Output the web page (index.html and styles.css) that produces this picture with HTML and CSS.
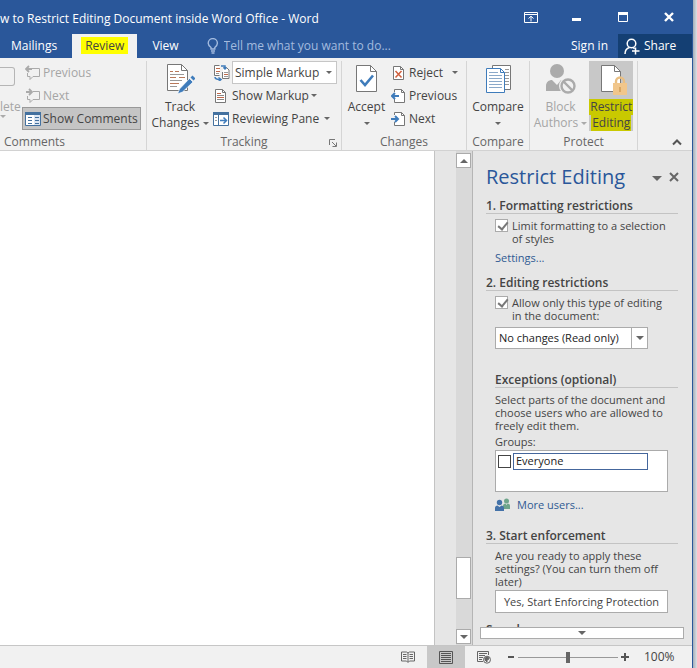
FILE: index.html
```
<!DOCTYPE html>
<html lang="en">
<head>
    <meta charset="UTF-8">
    <meta name="viewport" content="width=device-width, initial-scale=1.0">
    <title>Restrict Editing - Word</title>
    <link rel="stylesheet" href="styles.css">
</head>
<body>

<div class="window">
    <header class="titlebar">
        <div class="doc-title">w to Restrict Editing Document inside Word Office - Word</div>
        <div class="window-buttons">
            <button class="win-btn" aria-label="Ribbon display options">
                <svg width="14" height="11" viewBox="0 0 14 11" fill="none" stroke="#fff"><path d="M.5.5h13v10H.5zM1 2.500h12M7 9.500V4.500M4.500 6.500L7 4.200l2.500 2.300"/></svg>
            </button>
            <button class="win-btn" aria-label="Minimize">
                <svg width="10" height="11" viewBox="0 0 10 11"><path d="M0 6h9v3H0z" fill="#fff"/></svg>
            </button>
            <button class="win-btn" aria-label="Maximize">
                <svg width="10" height="10" viewBox="0 0 10 10"><path d="M.5.5h9v9h-9z" fill="none" stroke="#fff"/><path d="M0 0h10v3H0z" fill="#fff"/></svg>
            </button>
            <button class="win-btn" aria-label="Close">
                <svg width="10" height="10" viewBox="0 0 10 10"><path d="M1 1l8 8M9 1L1 9" stroke="#fff" stroke-width="2.400"/></svg>
            </button>
        </div>
    </header>

    <nav class="tabs">
        <button class="tab">Mailings</button>
        <button class="tab active"><span class="marker">Review</span></button>
        <button class="tab">View</button>
        <label class="tell-me">
            <svg width="12" height="16" viewBox="0 0 12 16" fill="none" stroke="#a3bbdf" stroke-width="1.400"><path d="M4 11V9.500C2.500 8.300 1.200 7 1.200 5.200a4.600 4.600 0 0 1 9.200 0c0 1.800-1.200 3.100-2.600 4.300V11zM4 13h4M4.500 15h3"/></svg>
            <input type="text" placeholder="Tell me what you want to do...">
        </label>
        <button class="sign-in">Sign in</button>
        <button class="share">
            <svg width="16" height="17" viewBox="0 0 16 17" fill="none" stroke="#fff" stroke-width="1.500"><circle cx="7.500" cy="5.500" r="4.300"/><path d="M1 16c0-3.500 1.600-5.600 4.500-6.500M9 9.500l1.500 1.200M11.500 9.500v7M8 13h7.500"/></svg>
            Share
        </button>
    </nav>

    <section class="ribbon">
        <div class="group comments">
            <div class="group-body">
                <button class="delete disabled">
                    <span class="delete-icon"></span>
                    <span>lete</span>
                    <i class="caret"></i>
                </button>
                <div class="rows">
                    <button class="row disabled">
                        <svg width="16" height="16" viewBox="0 0 16 16" fill="none" stroke="#aaa"><path d="M7 3.500h7.500v8H8l-3 3v-3H2.500V8"/><path d="M1 4h6M4 1L1 4l3 3" stroke-width="1.800"/></svg>
                        Previous
                    </button>
                    <button class="row disabled">
                        <svg width="16" height="16" viewBox="0 0 16 16" fill="none" stroke="#aaa"><path d="M8 3.500h6.500v8H8l-3 3v-3H2.500V8"/><path d="M1 4h6M4 1l3 3-3 3" stroke-width="1.800"/></svg>
                        Next
                    </button>
                    <button class="row pressed">
                        <svg width="16" height="14" viewBox="0 0 16 14"><path d="M.5.5h15v13H.5z" fill="#fff" stroke="#44719f"/><path d="M0 0h16v3H0z" fill="#44719f"/><path d="M9 3h6v10H9z" fill="#dce6f2"/><path d="M3 5.500h4M3 8.500h4M3 11.500h4M10 5.500h4M10 8.500h4M10 11.500h4" stroke="#44719f"/></svg>
                        Show Comments
                    </button>
                </div>
            </div>
            <div class="group-name">Comments</div>
        </div>

        <div class="group tracking">
            <div class="group-body">
                <button class="big">
                    <svg width="29" height="32" viewBox="0 0 29 32"><path d="M1.500 1.500h14l6 6v20h-20z" fill="#fff" stroke="#777"/><path d="M15.500 1.500v6h6" fill="none" stroke="#777"/><path d="M4 8.500h3M9 8.500h4M4 14.500h6M13 14.500h6M4 20.500h9" stroke="#b9795b"/><path d="M4 11.500h14M4 17.500h12M4 23.500h7" stroke="#999"/><path d="M13.500 26l10-10.500 3.500 3.500-10.500 10-5 2z" fill="#3f7cbb" stroke="#fff" stroke-width=".7"/><path d="M24.500 14.500l2-2 3 3-2 2z" fill="#3f7cbb"/></svg>
                    <span>Track</span>
                    <span>Changes <i class="caret"></i></span>
                </button>
                <div class="rows">
                    <div class="row markup">
                        <svg width="17" height="17" viewBox="0 0 17 17" fill="none"><path d="M6.500 1.500h-5v10h5M10.500 3.500h3l2.500 2.500v8.500H9.500V8" fill="#fff" stroke="#777"/><path d="M3 4.500h4M3 7.500h4M11 10.500h4" stroke="#bf6a4a"/><path d="M3 9.500h3M11 8.500h4M11 12.500h4" stroke="#999"/><path d="M8 2h4v3M13.500 3.500L12 5l-1.500-1.500M2 13c0 2 2 2.500 5 2.500M5.500 13.500L8 15.500l-2.500 2" stroke="#3f7cbb" stroke-width="1.500"/></svg>
                        <span class="markup-box">
                            <select aria-label="Display for review"><option>Simple Markup</option></select>
                            <i class="caret"></i>
                        </span>
                    </div>
                    <button class="row">
                        <svg width="17" height="16" viewBox="0 0 17 16"><path d="M2.500 1.500h7l3 3v10h-10z" fill="#fff" stroke="#777"/><path d="M9.500 1.500v3h3" fill="none" stroke="#777"/><path d="M4 5.500h4M4 9.500h7" stroke="#c1694b"/><path d="M4 7.500h7M4 11.500h7" stroke="#888"/></svg>
                        Show Markup<i class="caret"></i>
                    </button>
                    <button class="row">
                        <svg width="17" height="14" viewBox="0 0 17 14"><path d="M.5.5h15v13H.5z" fill="#fff" stroke="#44719f"/><path d="M0 0h16v3H0z" fill="#44719f"/><path d="M5.500 3v10" stroke="#44719f"/><path d="M2 5.500h2M2 8.500h2" stroke="#999"/><path d="M7 8.500h6M10.500 5.500l3 3-3 3" fill="none" stroke="#3f7cbb" stroke-width="1.500"/></svg>
                        Reviewing Pane<i class="caret far"></i>
                    </button>
                </div>
            </div>
            <div class="group-name">Tracking
                <svg class="launcher" width="8" height="8" viewBox="0 0 8 8" fill="none" stroke="#777"><path d="M.5 6V.5H6M3 3l4 4M7.500 3.500v4h-4"/></svg>
            </div>
        </div>

        <div class="group changes">
            <div class="group-body">
                <button class="big">
                    <svg width="24" height="32" viewBox="0 0 24 32"><path d="M1.500 2.500h14l6 6v20h-20z" fill="#fff" stroke="#777"/><path d="M15.500 2.500v6h6" fill="none" stroke="#777"/><path d="M5.500 17l4.500 5 8-9.500" fill="none" stroke="#3f7cbb" stroke-width="2.600"/></svg>
                    <span>Accept</span>
                    <span><i class="caret"></i></span>
                </button>
                <div class="rows">
                    <button class="row">
                        <svg width="15" height="16" viewBox="0 0 15 16"><path d="M2.500 1.500h7l3 3v10h-10z" fill="#fff" stroke="#777"/><path d="M9.500 1.500v3h3" fill="none" stroke="#777"/><path d="M4.500 6l6 6.500M10.500 6l-6 6.500" stroke="#d0603e" stroke-width="1.500"/></svg>
                        Reject<i class="caret far"></i>
                    </button>
                    <button class="row">
                        <svg width="15" height="16" viewBox="0 0 15 16"><path d="M3.500 4V1.500h7l3 3v10h-10V11" fill="#fff" stroke="#777"/><path d="M10.500 1.500v3h3" fill="none" stroke="#777"/><path d="M1 8h7M4 5L1 8l3 3" fill="none" stroke="#3f7cbb" stroke-width="2"/></svg>
                        Previous
                    </button>
                    <button class="row">
                        <svg width="15" height="16" viewBox="0 0 15 16"><path d="M3.500 4V1.500h7l3 3v10h-10V11" fill="#fff" stroke="#777"/><path d="M10.500 1.500v3h3" fill="none" stroke="#777"/><path d="M0 8h7M4 5l3 3-3 3" fill="none" stroke="#3f7cbb" stroke-width="2"/></svg>
                        Next
                    </button>
                </div>
            </div>
            <div class="group-name">Changes</div>
        </div>

        <div class="group compare">
            <div class="group-body">
                <button class="big">
                    <svg width="28" height="32" viewBox="0 0 28 32"><path d="M8.500 2.500h18v24h-18z" fill="#fff" stroke="#777"/><path d="M21 6.500h4M21 9.500h4M21 12.500h4M21 15.500h4M21 18.500h4M21 21.500h4" stroke="#999"/><path d="M2.500 5.500h14l4 4v20h-18z" fill="#fff" stroke="#3f7cbb"/><path d="M16.500 5.500v4h4" fill="none" stroke="#3f7cbb"/><path d="M5 9.500h9M5 12.500h13M5 15.500h13M5 18.500h13M5 21.500h13M5 24.500h13" stroke="#8ba9c9"/></svg>
                    <span>Compare</span>
                    <span><i class="caret"></i></span>
                </button>
            </div>
            <div class="group-name">Compare</div>
        </div>

        <div class="group protect">
            <div class="group-body">
                <button class="big disabled">
                    <svg width="32" height="32" viewBox="0 0 32 32"><circle cx="13" cy="8" r="7" fill="#ababab"/><path d="M2 28v-5c0-4 3-6 6-6l5 5 4-5c3 0 5 1 6 4v7z" fill="#ababab"/><circle cx="24" cy="23" r="7" fill="#f1f1f1" stroke="#f1f1f1" stroke-width="4"/><circle cx="24" cy="23" r="6.500" fill="none" stroke="#ababab" stroke-width="2.400"/><path d="M19.500 18.500l9 9" stroke="#ababab" stroke-width="2.400"/></svg>
                    <span>Block</span>
                    <span>Authors <i class="caret"></i></span>
                </button>
                <button class="big restrict">
                    <svg width="32" height="32" viewBox="0 0 32 32"><path d="M6.500 2.500h13l6 6v20h-19z" fill="#fff" stroke="#777"/><path d="M19.500 2.500v6h6" fill="none" stroke="#777"/><path d="M21 21v-2.500a4 4 0 0 1 8 0V21" fill="none" stroke="#e9bf83" stroke-width="2.400"/><path d="M18 20h14v12H18z" fill="#f1c68b"/><path d="M25 24v5" stroke="#d9a763" stroke-width="2"/></svg>
                    <span class="marker-dark">Restrict</span>
                    <span class="marker-dark">Editing</span>
                </button>
            </div>
            <div class="group-name">Protect</div>
        </div>

        <button class="collapse" aria-label="Collapse the ribbon">
            <svg width="10" height="7" viewBox="0 0 10 7"><path d="M1 5.500l4-4 4 4" fill="none" stroke="#555" stroke-width="2"/></svg>
        </button>
    </section>

    <main class="workspace">
        <div class="page"></div>
        <div class="scrollbar">
            <button class="scroll-btn" aria-label="Scroll up"><i class="caret up"></i></button>
            <div class="scroll-before"></div>
            <div class="scroll-thumb"></div>
            <div class="scroll-after"></div>
            <button class="scroll-btn" aria-label="Scroll down"><i class="caret"></i></button>
        </div>

        <aside class="pane">
            <div class="pane-header">
                <h1>Restrict Editing</h1>
                <button aria-label="Pane options"><i class="caret large"></i></button>
                <button aria-label="Close pane">
                    <svg width="10" height="10" viewBox="0 0 10 10"><path d="M1 1l8 8M9 1L1 9" stroke="#666" stroke-width="2"/></svg>
                </button>
            </div>
            <div class="pane-body">
                <h2>1. Formatting restrictions</h2>
                <div class="block">
                    <label class="check"><input type="checkbox" checked><span>Limit formatting to a selection<br>of styles</span></label>
                    <a class="settings" href="#">Settings...</a>
                </div>

                <h2>2. Editing restrictions</h2>
                <div class="block">
                    <label class="check"><input type="checkbox" checked><span>Allow only this type of editing<br>in the document:</span></label>
                    <div class="combo">
                        <select aria-label="Type of editing"><option>No changes (Read only)</option></select>
                        <span class="combo-arrow"><i class="caret"></i></span>
                    </div>
                </div>

                <div class="exceptions">
                    <h2>Exceptions (optional)</h2>
                    <p>Select parts of the document and<br>choose users who are allowed to<br>freely edit them.</p>
                    <p class="groups-label">Groups:</p>
                    <div class="group-list">
                        <label><input type="checkbox"><span>Everyone</span></label>
                    </div>
                    <a class="more-users" href="#">
                        <svg width="16" height="13" viewBox="0 0 16 13"><circle cx="11.500" cy="3" r="2.500" fill="#6fa58b"/><path d="M8 11V8c0-1.500 1-2.500 2.500-2.500L11.500 7l1-1.500C14 5.500 15 6.500 15 8v3z" fill="#6fa58b"/><circle cx="4.500" cy="4.500" r="2.700" fill="#4472a8"/><path d="M0 13v-3c0-1.500 1-2.500 2.500-2.500L4.500 9l2-1.500C8 7.500 9 8.500 9 10v3z" fill="#4472a8"/></svg>
                        More users...
                    </a>
                </div>

                <h2>3. Start enforcement</h2>
                <div class="block">
                    <p>Are you ready to apply these<br>settings? (You can turn them off<br>later)</p>
                    <button class="enforce">Yes, Start Enforcing Protection</button>
                </div>

                <h2>See also</h2>
            </div>
            <button class="pane-more" aria-label="Scroll pane down"><i class="caret"></i></button>
        </aside>
    </main>

    <footer class="statusbar">
        <button class="view-btn" aria-label="Read mode">
            <svg width="14" height="12" viewBox="0 0 14 12" fill="none" stroke="#666"><path d="M7 2L5.500 1H.5v9h5L7 11.500 8.500 10h5V1h-5L7 2v9M2 3.500h3.500M2 5.500h3.500M2 7.500h3.500M8.500 3.500H12M8.500 5.500H12M8.500 7.500H12"/></svg>
        </button>
        <button class="view-btn selected" aria-label="Print layout">
            <svg width="14" height="13" viewBox="0 0 14 13" fill="none" stroke="#555"><path d="M.5.500h13v12H.5zM2 2.500h10M2 4.500h10M2 6.500h10M2 8.500h10M2 10.500h10"/></svg>
        </button>
        <button class="view-btn" aria-label="Web layout">
            <svg width="14" height="13" viewBox="0 0 14 13" fill="none" stroke="#666"><path d="M11.500 4V.500H.500v10H6M2 2.500h8M2 4.500h6M2 6.500h4M2 8.500h3"/><circle cx="10" cy="8.700" r="3.500"/><path d="M8 7l3-1 1 2-2 1v2L8 9z" fill="#666"/></svg>
        </button>
        <div class="zoom">
            <button aria-label="Zoom out"><svg width="8" height="8" viewBox="0 0 8 8"><path d="M1 3h6v2H1z" fill="#555"/></svg></button>
            <input type="range" min="0" max="100" value="50" aria-label="Zoom">
            <button aria-label="Zoom in"><svg width="8" height="8" viewBox="0 0 8 8"><path d="M3 0h2v3h3v2H5v3H3V5H0V3h3z" fill="#555"/></svg></button>
        </div>
        <span class="percent">100%</span>
    </footer>
</div>

</body>
</html>
```
FILE: styles.css
```
* {
    box-sizing: border-box;
}

body {
    margin: 0;
    font-family: "Open Sans", "Noto Sans", sans-serif;
    font-size: 12px;
    line-height: 16px;
    color: #444;
    background: linear-gradient(to left, #dde1e5, #a4adb8 4px);
}

button, input, select {
    font: inherit;
    color: inherit;
    margin: 0;
}

button {
    padding: 0;
    border: none;
    background: none;
    white-space: nowrap;
}

svg {
    display: block;
    flex: none;
}

a {
    color: #2f5a93;
    text-decoration: none;
}

h1, h2, p {
    margin: 0;
}

.window {
    display: flex;
    flex-direction: column;
    height: 100vh;
    margin-right: 4px;
    border-right: 1px solid #2a579a;
    background: #e6e6e6;
    overflow: hidden;
}

/* Small triangles on menus and scroll buttons */
.caret {
    display: inline-block;
    flex: none;
    vertical-align: middle;
    border: 3px solid transparent;
    border-top-color: #666;
    border-bottom: none;
}

.caret.up {
    border-top: none;
    border-bottom: 3px solid #666;
}

.caret.large {
    border-width: 5px;
    border-bottom: none;
}

/* Title bar */
.titlebar {
    display: flex;
    justify-content: space-between;
    align-items: center;
    height: 34px;
    flex: none;
    background: #2a579a;
    color: #fff;
}

.doc-title {
    padding-top: 4px;
    white-space: nowrap;
}

.window-buttons {
    display: flex;
}

.win-btn {
    display: flex;
    align-items: center;
    justify-content: center;
    width: 46px;
    height: 34px;
}

/* Tabs */
.tabs {
    display: flex;
    height: 24px;
    flex: none;
    background: #2a579a;
    color: #fff;
}

.tab {
    padding: 0 15px;
}

.tab:first-child {
    padding-left: 11px;
}

.tab.active {
    padding: 0 9px;
    background: #f1f1f1;
    color: #444;
}

.marker {
    padding: 0 4px;
    background: #ff0;
}

.tell-me {
    display: flex;
    flex: 1;
    align-items: center;
    gap: 5px;
    padding-left: 13px;
}

.tell-me input {
    flex: 1;
    min-width: 0;
    padding: 0;
    border: none;
    outline: none;
    background: none;
}

.tell-me input::placeholder {
    color: #a3bbdf;
    opacity: 1;
}

.sign-in {
    padding: 0 10px;
}

.share {
    display: flex;
    align-items: center;
    gap: 4px;
    width: 74px;
    padding-left: 6px;
    background: #143f73;
}

/* Ribbon */
.ribbon {
    display: flex;
    height: 93px;
    flex: none;
    padding-top: 3px;
    border-bottom: 1px solid #d2d2d2;
    background: #f1f1f1;
}

.group {
    display: flex;
    flex-direction: column;
    flex: none;
    border-right: 1px solid #d5d5d5;
}

.comments {
    width: 147px;
}

.tracking {
    width: 195px;
}

.changes {
    width: 125px;
}

.compare {
    width: 63px;
}

.protect {
    width: 108px;
}

.group-body {
    display: flex;
    flex: 1;
}

.group-name {
    display: flex;
    justify-content: center;
    position: relative;
    height: 16px;
    color: #666;
}

.comments .group-name {
    justify-content: flex-start;
    padding-left: 4px;
}

.launcher {
    position: absolute;
    right: 4px;
    top: 5px;
}

.rows {
    display: flex;
    flex-direction: column;
}

.row {
    display: flex;
    align-items: center;
    gap: 2px;
    height: 23px;
}

.row .far {
    margin-left: 6px;
}

.disabled {
    color: #a5a5a5;
}

.disabled .caret {
    border-top-color: #aaa;
}

.comments .rows {
    margin-left: 5px;
}

.comments .row {
    padding: 0 3px;
}

.comments .pressed {
    padding: 0 2px;
    border: 1px solid #999;
    background: #c5c5c5;
}

.delete {
    display: flex;
    flex-direction: column;
    align-items: flex-start;
    width: 17px;
    padding-top: 6px;
}

.delete-icon {
    width: 15px;
    height: 19px;
    margin-bottom: 13px;
    border: 1px solid #b5b5b5;
    border-left: none;
    border-radius: 0 3px 3px 0;
}

.big {
    display: flex;
    flex-direction: column;
    align-items: center;
    height: 70px;
    padding-top: 2px;
}

.big svg {
    margin-bottom: 4px;
}

.tracking .big {
    width: 66px;
}

.tracking .row .far {
    margin-left: 3px;
}

.markup-box {
    display: flex;
    position: relative;
}

.markup-box select {
    width: 105px;
    height: 23px;
    padding: 0 0 0 2px;
    border: 1px solid #c6c6c6;
    border-radius: 0;
    background: #fff;
    appearance: none;
}

.markup-box .caret {
    position: absolute;
    right: 5px;
    top: 10px;
    pointer-events: none;
}

.changes .big {
    width: 49px;
}

.changes .row {
    gap: 3px;
}

.compare .group-body,
.protect .group-body {
    justify-content: center;
}

.protect .group-body {
    gap: 2px;
}

.restrict {
    width: 44px;
    background: #c8c8c8;
}

.marker-dark {
    padding: 0 1px;
    background: #c9c900;
}

.collapse {
    align-self: flex-end;
    margin: 0 10px 4px auto;
}

/* Document area */
.workspace {
    display: flex;
    flex: 1;
    min-height: 0;
}

.page {
    flex: 1;
    margin-right: 21px;
    border-right: 1px solid #c3c3c3;
    background: #fff;
}

.scrollbar {
    display: flex;
    flex-direction: column;
    flex: none;
    width: 16px;
    padding: 2px 1px 1px 0;
    background: #d9d9d9;
}

.scroll-btn {
    display: flex;
    align-items: center;
    justify-content: center;
    height: 15px;
    flex: none;
    border: 1px solid #ababab;
    background: #fff;
}

.scroll-before {
    flex: 13;
}

.scroll-thumb {
    flex: none;
    height: 42px;
    border: 1px solid #ababab;
    background: #fff;
}

.scroll-after {
    flex: 1;
}

/* Restrict Editing pane */
.pane {
    display: flex;
    flex-direction: column;
    flex: none;
    width: 220px;
    padding: 12px 8px 6px 7px;
    border-left: 1px solid #b5b5b5;
    line-height: 13px;
    font-size: 11px;
}

.pane-header {
    display: flex;
    align-items: center;
    gap: 7px;
    height: 28px;
    flex: none;
    padding: 0 5px 0 6px;
}

.pane-header h1 {
    flex: 1;
    font-size: 20px;
    font-weight: 400;
    line-height: 28px;
    color: #2a579a;
    white-space: nowrap;
}

.pane-body {
    flex: 1;
    min-height: 0;
    padding: 7px 6px 0;
    overflow: hidden;
}

.pane-body h2 {
    margin-bottom: 5px;
    border-bottom: 1px solid #c3c3c3;
    font-size: 12px;
    font-weight: 600;
    line-height: 15px;
}

.block {
    margin: 0 0 9px 9px;
}

.check {
    display: flex;
    gap: 4px;
    margin-bottom: 5px;
    white-space: nowrap;
}

.check input {
    flex: none;
    width: 13px;
    height: 13px;
    border: 1px solid #ababab;
    background: #fff;
    appearance: none;
}

.check input:checked::before {
    content: "";
    display: block;
    width: 4px;
    height: 8px;
    margin: 0 0 0 4px;
    border: solid #777;
    border-width: 0 2px 2px 0;
    transform: rotate(40deg);
}

.settings {
    display: block;
    line-height: 16px;
}

.combo {
    display: flex;
    position: relative;
    width: 153px;
}

.combo select {
    width: 100%;
    height: 22px;
    padding: 0 0 0 3px;
    border: 1px solid #ababab;
    border-radius: 0;
    background: #fff;
    color: #222;
    line-height: 16px;
    appearance: none;
}

.combo-arrow {
    display: flex;
    align-items: center;
    justify-content: center;
    position: absolute;
    top: 1px;
    right: 1px;
    bottom: 1px;
    width: 16px;
    border-left: 1px solid #ababab;
    pointer-events: none;
}

.combo .caret,
.scroll-btn .caret {
    border-width: 4px;
    border-bottom-width: 0;
}

.scroll-btn .caret.up {
    border-width: 0 4px 4px;
}

.exceptions {
    margin: 23px 0 17px 9px;
}

.exceptions p,
.block p {
    white-space: nowrap;
}

.exceptions .groups-label {
    margin: 3px 0 2px;
}

.group-list {
    width: 173px;
    height: 42px;
    padding: 2px;
    border: 1px solid #ababab;
    background: #fff;
}

.group-list label {
    display: flex;
    align-items: center;
    gap: 2px;
    color: #222;
}

.group-list input {
    width: 13px;
    height: 13px;
    border: 1px solid #444;
    background: #fff;
    appearance: none;
}

.group-list span {
    width: 135px;
    padding: 0 2px 2px;
    border: 1px solid #44669c;
}

.more-users {
    display: flex;
    align-items: center;
    gap: 6px;
    margin-top: 6px;
}

.enforce {
    width: 173px;
    height: 23px;
    margin-top: 2px;
    border: 1px solid #ababab;
    background: #fff;
}

.pane-more {
    display: flex;
    align-items: center;
    justify-content: center;
    height: 12px;
    flex: none;
    border: 1px solid #ababab;
    background: #fff;
}

.pane-more .caret {
    border-width: 4px;
    border-bottom-width: 0;
}

/* Status bar */
.statusbar {
    display: flex;
    align-items: center;
    justify-content: flex-end;
    height: 23px;
    flex: none;
    border-top: 1px solid #c6c6c6;
    background: #f1f1f1;
}

.view-btn {
    display: flex;
    align-items: center;
    justify-content: center;
    width: 38px;
    height: 22px;
}

.view-btn.selected {
    background: #c8c8c8;
}

.zoom {
    display: flex;
    align-items: center;
    gap: 3px;
    margin-left: 4px;
}

.zoom input {
    width: 100px;
    height: 12px;
    background: linear-gradient(#999, #999) center / 100% 1px no-repeat;
    appearance: none;
}

.zoom input::-webkit-slider-thumb {
    width: 4px;
    height: 11px;
    background: #666;
    appearance: none;
}

.percent {
    width: 63px;
    padding-left: 15px;
}
```
